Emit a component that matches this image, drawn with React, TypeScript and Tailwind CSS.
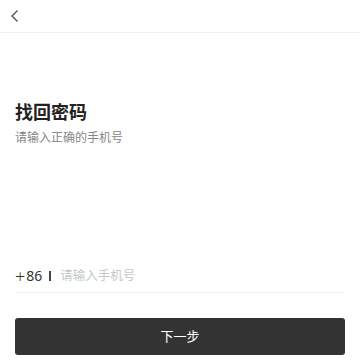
import React from "react";

export default function App() {
  return (
    <div
      className="w-[360px] h-[360px] bg-white overflow-hidden flex flex-col"
      style={{ fontFamily: '"Noto Sans", "Noto Sans CJK SC", sans-serif' }}
    >
      <div className="h-[33px] border-b border-[#eeeeee] flex items-center pl-[10px] shrink-0">
        <svg width="10" height="14" viewBox="0 0 10 14" fill="none">
          <path d="M7.5 1.5 L2 7 L7.5 12.5" stroke="#555" strokeWidth="1.4" />
        </svg>
      </div>
      <div className="px-[15px] pt-[67px]">
        <div className="text-[18px] leading-[24px] font-bold text-[#222]">找回密码</div>
        <div className="mt-[6px] text-[12px] leading-[16px] text-[#888]">请输入正确的手机号</div>
      </div>
      <div className="mx-[15px] mt-[113px] h-[34px] border-b border-[#f0f0f0] flex items-center text-[14px] leading-[20px]">
        <span className="text-[#333] text-[18px] leading-[20px] font-light">+</span>
        <span className="text-[#333] ml-[1px]">86</span>
        <span className="ml-[7px] w-[2px] h-[10px] bg-[#444]"></span>
        <span className="ml-[9px] text-[12.5px] text-[#c2c8cc]">请输入手机号</span>
      </div>
      <button className="mx-[15px] mt-[25px] h-[37px] rounded-[3px] bg-[#333333] text-white text-[13px] flex items-center justify-center">
        下一步
      </button>
    </div>
  );
}
